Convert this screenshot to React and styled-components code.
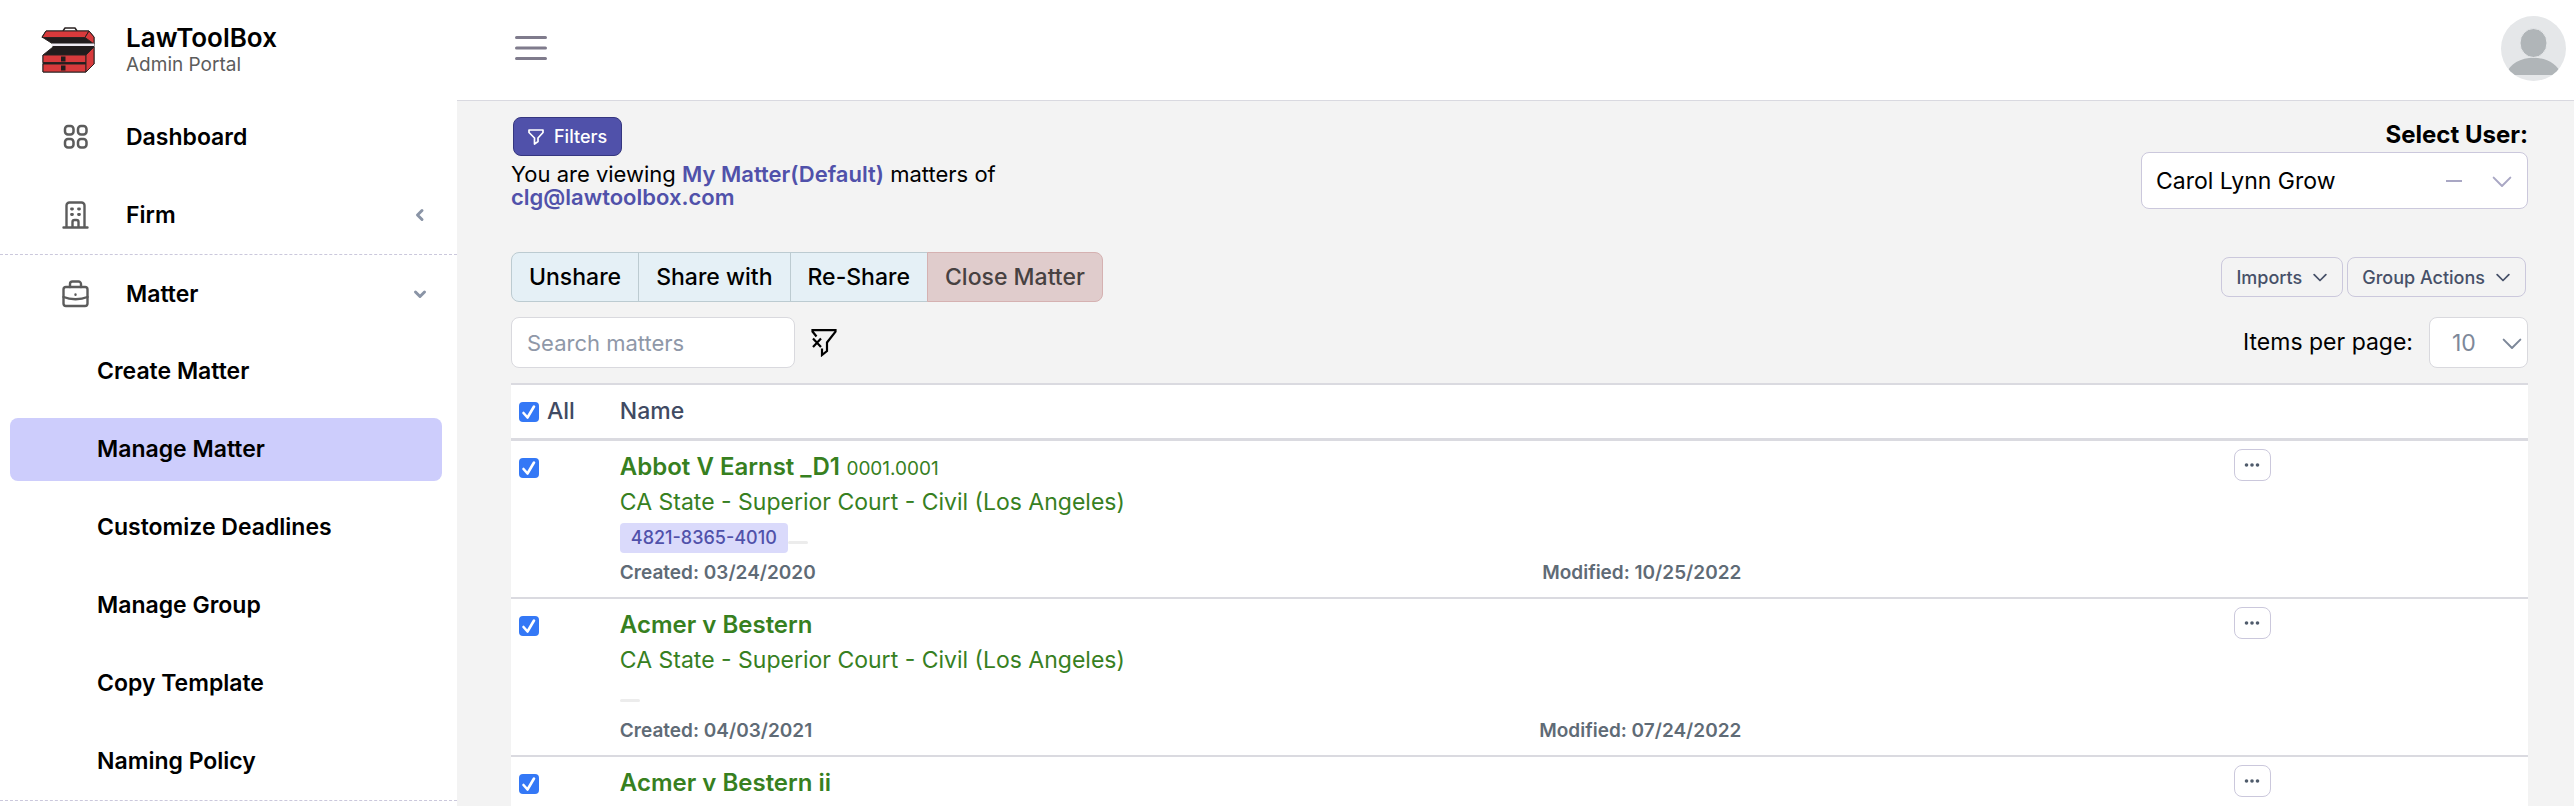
import React from "react";
import styled, { createGlobalStyle } from "styled-components";

const GlobalStyle = createGlobalStyle`
  * {
    box-sizing: border-box;
  }
  body {
    margin: 0;
    background: #f3f3f3;
    color: #000000;
    font-family: Inter, "Liberation Sans", sans-serif;
    font-size: 23px;
    line-height: 35px;
  }
  button,
  input,
  select {
    font-family: inherit;
  }
`;

const Shell = styled.div`
  display: grid;
  grid-template-columns: 457px 1fr;
  height: 100vh;
  overflow: hidden;
`;

const Sidebar = styled.aside`
  background: #ffffff;
`;

const Brand = styled.a`
  display: flex;
  align-items: center;
  gap: 31px;
  height: 98px;
  padding: 2px 0 0 41px;
  color: inherit;
  text-decoration: none;
`;

const BrandName = styled.div`
  font-size: 26px;
  font-weight: 600;
  line-height: 28px;
`;

const BrandSub = styled.div`
  font-size: 19px;
  line-height: 25px;
  color: #5c5c5c;
`;

const NavItem = styled.a`
  display: flex;
  align-items: center;
  height: 78px;
  padding: 0 30px 0 60px;
  font-weight: 600;
  color: #000000;
  text-decoration: none;
`;

const NavIcon = styled.span`
  display: flex;
  width: 66px;
  color: #5c5c5c;
`;

const NavArrow = styled.span`
  display: flex;
  margin-left: auto;
  color: #8a94a6;
`;

const Divider = styled.hr`
  margin: 0;
  border: 0;
  border-top: 1px dashed #cbc8dc;
`;

const SubNav = styled.nav`
  display: grid;
  gap: 15px;
  padding: 7px 15px 7px 10px;
`;

const SubItem = styled.a`
  padding-left: 87px;
  border-radius: 8px;
  line-height: 63px;
  font-weight: 600;
  color: #000000;
  text-decoration: none;
  background: ${({ $active }) => ($active ? "#cdcdfc" : "transparent")};
`;

const Page = styled.div`
  min-width: 0;
`;

const Topbar = styled.header`
  display: flex;
  align-items: center;
  justify-content: space-between;
  height: 101px;
  padding: 0 8px 4px 58px;
  background: #ffffff;
  border-bottom: 1px solid #d9d9e0;
`;

const IconButton = styled.button`
  display: flex;
  padding: 0;
  border: 0;
  background: none;
  color: inherit;
  cursor: pointer;
`;

const Content = styled.main`
  padding: 16px 46px 0 54px;
`;

const Row = styled.div`
  display: flex;
  align-items: ${({ $align }) => $align || "center"};
  justify-content: space-between;
  margin-bottom: ${({ $space }) => $space || 0}px;
`;

const FilterButton = styled.button`
  display: flex;
  align-items: center;
  gap: 10px;
  height: 39px;
  margin-left: 2px;
  padding: 0 14px;
  border: 1px solid #35367f;
  border-radius: 8px;
  background: #5051aa;
  color: #ffffff;
  font-size: 18px;
  font-weight: 500;
`;

const Viewing = styled.p`
  max-width: 560px;
  margin: 7px 0 0;
  font-size: 22px;
  line-height: 23px;
`;

const Accent = styled.b`
  font-weight: 600;
  color: #5051aa;
`;

const UserPicker = styled.div`
  width: 387px;
`;

const PickerLabel = styled.label`
  display: block;
  text-align: right;
  font-size: 24px;
  font-weight: 700;
`;

const SelectBox = styled.div`
  display: grid;
  align-items: center;
  height: ${({ $height }) => $height}px;
  border: 1px solid ${({ $line }) => $line};
  border-radius: 8px;
  background: #ffffff;
  color: #7d8899;

  & > * {
    grid-area: 1 / 1;
  }
  & > svg,
  & > span {
    justify-self: end;
    margin-right: ${({ $inset }) => $inset}px;
    pointer-events: none;
  }
`;

const Select = styled.select`
  width: 100%;
  height: 100%;
  padding: 0 16px;
  padding-left: ${({ $left }) => $left}px;
  border: 0;
  background: none;
  appearance: none;
  font-size: 23px;
  color: ${({ $color }) => $color};
`;

const Marks = styled.span`
  display: flex;
  align-items: center;
  gap: 30px;
  color: #a9a7c4;
`;

const ButtonGroup = styled.div`
  display: flex;
`;

const GroupButton = styled.button`
  height: 50px;
  margin-left: -1px;
  padding: 0 17px;
  border: 1px solid ${({ $danger }) => ($danger ? "#d5b1b1" : "#bccbd1")};
  background: ${({ $danger }) => ($danger ? "#e0cccc" : "#e5f0f6")};
  color: ${({ $danger }) => ($danger ? "#474141" : "#000000")};
  font-size: 23px;
  font-weight: 500;

  &:first-child {
    margin-left: 0;
    border-radius: 8px 0 0 8px;
  }
  &:last-child {
    border-radius: 0 8px 8px 0;
  }
`;

const Actions = styled.div`
  display: flex;
  gap: 4px;
  padding-right: 2px;
`;

const MenuButton = styled.button`
  display: flex;
  align-items: center;
  gap: 11px;
  height: 40px;
  padding: 0 15px 0 14px;
  border: 1px solid #cbc8dc;
  border-radius: 8px;
  background: none;
  color: #465068;
  font-size: 18px;
  font-weight: 500;
`;

const Cluster = styled.div`
  display: flex;
  align-items: center;
  gap: 16px;
`;

const Search = styled.input`
  width: 284px;
  height: 51px;
  padding: 0 15px;
  border: 1px solid #d9d9de;
  border-radius: 8px;
  background: #ffffff;
  font-size: 22px;

  &::placeholder {
    color: #8f98a8;
    opacity: 1;
  }
`;

const PageSize = styled.div`
  width: 99px;
`;

const Table = styled.table`
  width: 100%;
  table-layout: fixed;
  border-collapse: separate;
  border-spacing: 0;
  border-top: 2px solid #dadae0;
  background: #ffffff;
`;

const HeadCell = styled.th`
  width: ${({ $width }) => $width};
  height: 56px;
  padding: 0 8px;
  border-bottom: 3px solid #dadae0;
  text-align: left;
  font-weight: 500;
  color: #404a62;
`;

const Cell = styled.td`
  padding: 8px;
  border-bottom: 2px solid #dadae0;
  vertical-align: top;
  text-align: ${({ $align }) => $align || "left"};
  line-height: 0;
`;

const MatterCell = styled(Cell)`
  padding-right: 0;
`;

const CheckLabel = styled.label`
  display: flex;
  align-items: center;
  gap: 8px;
`;

const Checkbox = styled.input`
  width: 20px;
  height: 20px;
  margin: 0;
  border-radius: 4px;
  appearance: none;
  background: #ffffff;
  border: 1px solid #8f98a8;

  &:checked {
    border: 0;
    background: #3478f6
      url("data:image/svg+xml,%3Csvg xmlns='http://www.w3.org/2000/svg' viewBox='0 0 20 20'%3E%3Cpath d='M4.5 11l4 4.5L15 4.5' fill='none' stroke='white' stroke-width='2.6' stroke-linecap='round' stroke-linejoin='round'/%3E%3C/svg%3E");
  }
`;

const RowCheck = styled(Checkbox)`
  margin-top: 9px;
`;

const Matter = styled.a`
  display: block;
  line-height: 35px;
  color: #37801f;
  text-decoration: none;

  & b {
    font-size: 24px;
    font-weight: 600;
  }
  & small {
    font-size: 19px;
    line-height: 19px;
  }
`;

const Tags = styled.div`
  display: flex;
  align-items: center;
  height: 36px;
`;

const Tag = styled.span`
  padding: 0 11px;
  border-radius: 4px;
  background: #dadafb;
  color: #5051aa;
  font-size: 18px;
  font-weight: 500;
  line-height: 30px;
`;

const EmptyTag = styled.span`
  width: 20px;
  height: 3px;
  margin-top: 8px;
  border-radius: 2px;
  background: #ececec;
`;

const Dates = styled.div`
  display: flex;
  justify-content: space-between;
  font-size: 19px;
  font-weight: 600;
  line-height: 33px;
  color: #5f6b76;
`;

const MoreButton = styled.button`
  display: inline-flex;
  align-items: center;
  justify-content: center;
  width: 37px;
  height: 32px;
  padding: 0;
  border: 1px solid #cbc8dc;
  border-radius: 8px;
  background: #ffffff;
  color: #4f5b6b;
`;

const Stroke = ({ w, h, box, width = 2, children, ...rest }) => (
  <svg
    width={w}
    height={h}
    viewBox={box || `0 0 ${w} ${h}`}
    fill="none"
    stroke="currentColor"
    strokeWidth={width}
    strokeLinecap="round"
    strokeLinejoin="round"
    aria-hidden="true"
    {...rest}
  >
    {children}
  </svg>
);

const ToolboxLogo = () => (
  <svg width="54" height="46" viewBox="0 0 54 46" aria-hidden="true">
    <g stroke="#2a2222" strokeLinejoin="round">
      <path d="M22 4l2-3h10l2 3" fill="none" strokeWidth="1.5" />
      <path d="M1 10l11 7v3L2 28v17h43l8-8V10l-5-6H5z" fill="#211c1d" />
      <path d="M1 11v16l9-8.500z" fill="#ffffff" stroke="none" />
      <path d="M5 4h43l-4 6.500H1z" fill="#d83a3c" />
      <path d="M48 4l5 6v7l-9-6.500z" fill="#d83a3c" />
      <path d="M2 28h43v7.500H2z" fill="#d83a3c" />
      <path d="M2 37h43v8H2z" fill="#d83a3c" />
      <path d="M45 28l8-8v17l-8 8z" fill="#d83a3c" />
    </g>
    <path d="M11 16.500h42V19H11z" fill="#eeeaf2" />
    <path d="M20 29.500h4.500v5H20zM20 38.500h4.500v5H20z" fill="#211c1d" />
  </svg>
);

const GridIcon = () => (
  <Stroke w={32} h={26} width={2.5}>
    <rect x="5" y="2" width="8.500" height="8.500" rx="3" />
    <rect x="18" y="2" width="8.500" height="8.500" rx="3" />
    <rect x="5" y="15" width="8.500" height="8.500" rx="3" />
    <rect x="18" y="15" width="8.500" height="8.500" rx="3" />
  </Stroke>
);

const BuildingIcon = () => (
  <Stroke w={32} h={28} width={2.4}>
    <path d="M3.500 26.500h24M6.500 26V4.500a3 3 0 0 1 3-3h12a3 3 0 0 1 3 3V26M12.500 26v-5a2 2 0 0 1 2-2h2a2 2 0 0 1 2 2v5" />
    <path d="M11.500 8h1M18.500 8h1M11.500 13.500h1M18.500 13.500h1" strokeWidth="2.800" />
  </Stroke>
);

const BriefcaseIcon = () => (
  <Stroke w={32} h={28} width={2.4}>
    <rect x="3.500" y="7" width="24" height="19" rx="2.500" />
    <path d="M10 7V4a2.500 2.500 0 0 1 2.500-2.500h6A2.500 2.500 0 0 1 21 4v3M3.500 17c7 3 17 3 24 0M15.500 14.500v.2" />
  </Stroke>
);

const Chevron = ({ w = 12, width = 2 }) => (
  <Stroke w={w} h={w} box="0 0 12 12" width={width}>
    <path d="M1 4l5 5 5-5" />
  </Stroke>
);

const NavDown = () => (
  <Stroke w={14} h={14} width={3}>
    <path d="M2.500 5l4.500 4.500L11.500 5" />
  </Stroke>
);

const NavBack = () => (
  <Stroke w={14} h={14} width={3}>
    <path d="M9 2.500L4.500 7 9 11.500" />
  </Stroke>
);

const Funnel = () => (
  <Stroke w={16} h={16} width={1.7}>
    <path d="M1 1h14v2.500L10 9v3.500L6.500 15V9L1 3.500z" />
  </Stroke>
);

const ClearFunnel = () => (
  <Stroke w={26} h={28} width={2.2} strokeLinecap="butt" strokeLinejoin="miter">
    <path d="M5.500 7.500L1.500 2.500V1.200h23v1.500L16 13.500V22l-5 4v-6.500" />
    <path d="M2 9.500l8 8.500M10 9.500L2 18" />
  </Stroke>
);

const Avatar = () => (
  <svg width="65" height="65" viewBox="0 0 65 65" aria-hidden="true">
    <clipPath id="avatar-clip">
      <circle cx="32.500" cy="32.500" r="32.500" />
    </clipPath>
    <g clipPath="url(#avatar-clip)">
      <path d="M0 0h65v65H0z" fill="#e5e7e9" />
      <path d="M5 59C11 36 54 36 60 59z" fill="#b0b5b8" />
      <ellipse cx="32.500" cy="27" rx="13.500" ry="14.500" fill="#b0b5b8" stroke="#e5e7e9" />
    </g>
  </svg>
);

const subItems = [
  "Create Matter",
  "Manage Matter",
  "Customize Deadlines",
  "Manage Group",
  "Copy Template",
  "Naming Policy",
];

const court = "CA State - Superior Court - Civil (Los Angeles)";

const matters = [
  {
    name: "Abbot V Earnst _D1",
    number: "0001.0001",
    tag: "4821-8365-4010",
    created: "03/24/2020",
    modified: "10/25/2022",
  },
  { name: "Acmer v Bestern", created: "04/03/2021", modified: "07/24/2022" },
  { name: "Acmer v Bestern ii", created: "04/03/2021", modified: "07/24/2022" },
];

const MatterRow = ({ matter }) => (
  <tr>
    <Cell>
      <RowCheck type="checkbox" defaultChecked aria-label={matter.name} />
    </Cell>
    <MatterCell>
      <Matter href="#matter">
        <b>{matter.name}</b> {matter.number && <small>{matter.number}</small>}
      </Matter>
      <Matter href="#court">{court}</Matter>
      <Tags>
        {matter.tag && <Tag>{matter.tag}</Tag>}
        <EmptyTag />
      </Tags>
      <Dates>
        <span>Created: {matter.created}</span>
        <span>Modified: {matter.modified}</span>
      </Dates>
    </MatterCell>
    <Cell />
    <Cell $align="center">
      <MoreButton aria-label="More actions">
        <svg width="16" height="4" viewBox="0 0 16 4" fill="currentColor">
          <circle cx="2.500" cy="2" r="1.800" />
          <circle cx="8" cy="2" r="1.800" />
          <circle cx="13.500" cy="2" r="1.800" />
        </svg>
      </MoreButton>
    </Cell>
  </tr>
);

export default function App() {
  return (
    <Shell>
      <GlobalStyle />
      <Sidebar>
        <Brand href="#home">
          <ToolboxLogo />
          <div>
            <BrandName>LawToolBox</BrandName>
            <BrandSub>Admin Portal</BrandSub>
          </div>
        </Brand>
        <NavItem href="#dashboard">
          <NavIcon>
            <GridIcon />
          </NavIcon>
          Dashboard
        </NavItem>
        <NavItem href="#firm">
          <NavIcon>
            <BuildingIcon />
          </NavIcon>
          Firm
          <NavArrow>
            <NavBack />
          </NavArrow>
        </NavItem>
        <Divider />
        <NavItem href="#matter">
          <NavIcon>
            <BriefcaseIcon />
          </NavIcon>
          Matter
          <NavArrow>
            <NavDown />
          </NavArrow>
        </NavItem>
        <SubNav>
          {subItems.map((item) => (
            <SubItem key={item} href="#sub" $active={item === "Manage Matter"}>
              {item}
            </SubItem>
          ))}
        </SubNav>
        <Divider />
      </Sidebar>

      <Page>
        <Topbar>
          <IconButton aria-label="Toggle menu">
            <Stroke w={32} h={26} width={3} color="#7f7b8c">
              <path d="M1.500 2.500h29M1.500 13h29M1.500 23.500h29" />
            </Stroke>
          </IconButton>
          <IconButton aria-label="Account">
            <Avatar />
          </IconButton>
        </Topbar>

        <Content>
          <Row $align="flex-start" $space={43}>
            <div>
              <FilterButton>
                <Funnel />
                Filters
              </FilterButton>
              <Viewing>
                You are viewing <Accent>My Matter(Default)</Accent> matters of{" "}
                <Accent>clg@lawtoolbox.com</Accent>
              </Viewing>
            </div>
            <UserPicker>
              <PickerLabel htmlFor="user">Select User:</PickerLabel>
              <SelectBox $height={57} $line="#cbc8dc" $inset={15}>
                <Select id="user" $left={14} $color="#000000">
                  <option>Carol Lynn Grow</option>
                </Select>
                <Marks>
                  <Stroke w={16} h={2}>
                    <path d="M0 1h16" />
                  </Stroke>
                  <Chevron w={20} width={1.2} />
                </Marks>
              </SelectBox>
            </UserPicker>
          </Row>

          <Row $space={15}>
            <ButtonGroup>
              <GroupButton>Unshare</GroupButton>
              <GroupButton>Share with</GroupButton>
              <GroupButton>Re-Share</GroupButton>
              <GroupButton $danger>Close Matter</GroupButton>
            </ButtonGroup>
            <Actions>
              <MenuButton>
                Imports <Chevron w={14} width={1.5} />
              </MenuButton>
              <MenuButton>
                Group Actions <Chevron w={14} width={1.5} />
              </MenuButton>
            </Actions>
          </Row>

          <Row $space={15}>
            <Cluster>
              <Search placeholder="Search matters" aria-label="Search matters" />
              <IconButton aria-label="Clear filters">
                <ClearFunnel />
              </IconButton>
            </Cluster>
            <Cluster>
              <label htmlFor="page-size">Items per page:</label>
              <PageSize>
                <SelectBox $height={51} $line="#d9d9de" $inset={5}>
                  <Select id="page-size" $left={22} $color="#7d8899">
                    <option>10</option>
                  </Select>
                  <Chevron w={20} width={1.2} />
                </SelectBox>
              </PageSize>
            </Cluster>
          </Row>

          <Table>
            <thead>
              <tr>
                <HeadCell $width="5%">
                  <CheckLabel>
                    <Checkbox type="checkbox" defaultChecked />
                    All
                  </CheckLabel>
                </HeadCell>
                <HeadCell $width="56%">Name</HeadCell>
                <HeadCell />
                <HeadCell $width="552px" />
              </tr>
            </thead>
            <tbody>
              {matters.map((matter) => (
                <MatterRow key={matter.name} matter={matter} />
              ))}
            </tbody>
          </Table>
        </Content>
      </Page>
    </Shell>
  );
}
